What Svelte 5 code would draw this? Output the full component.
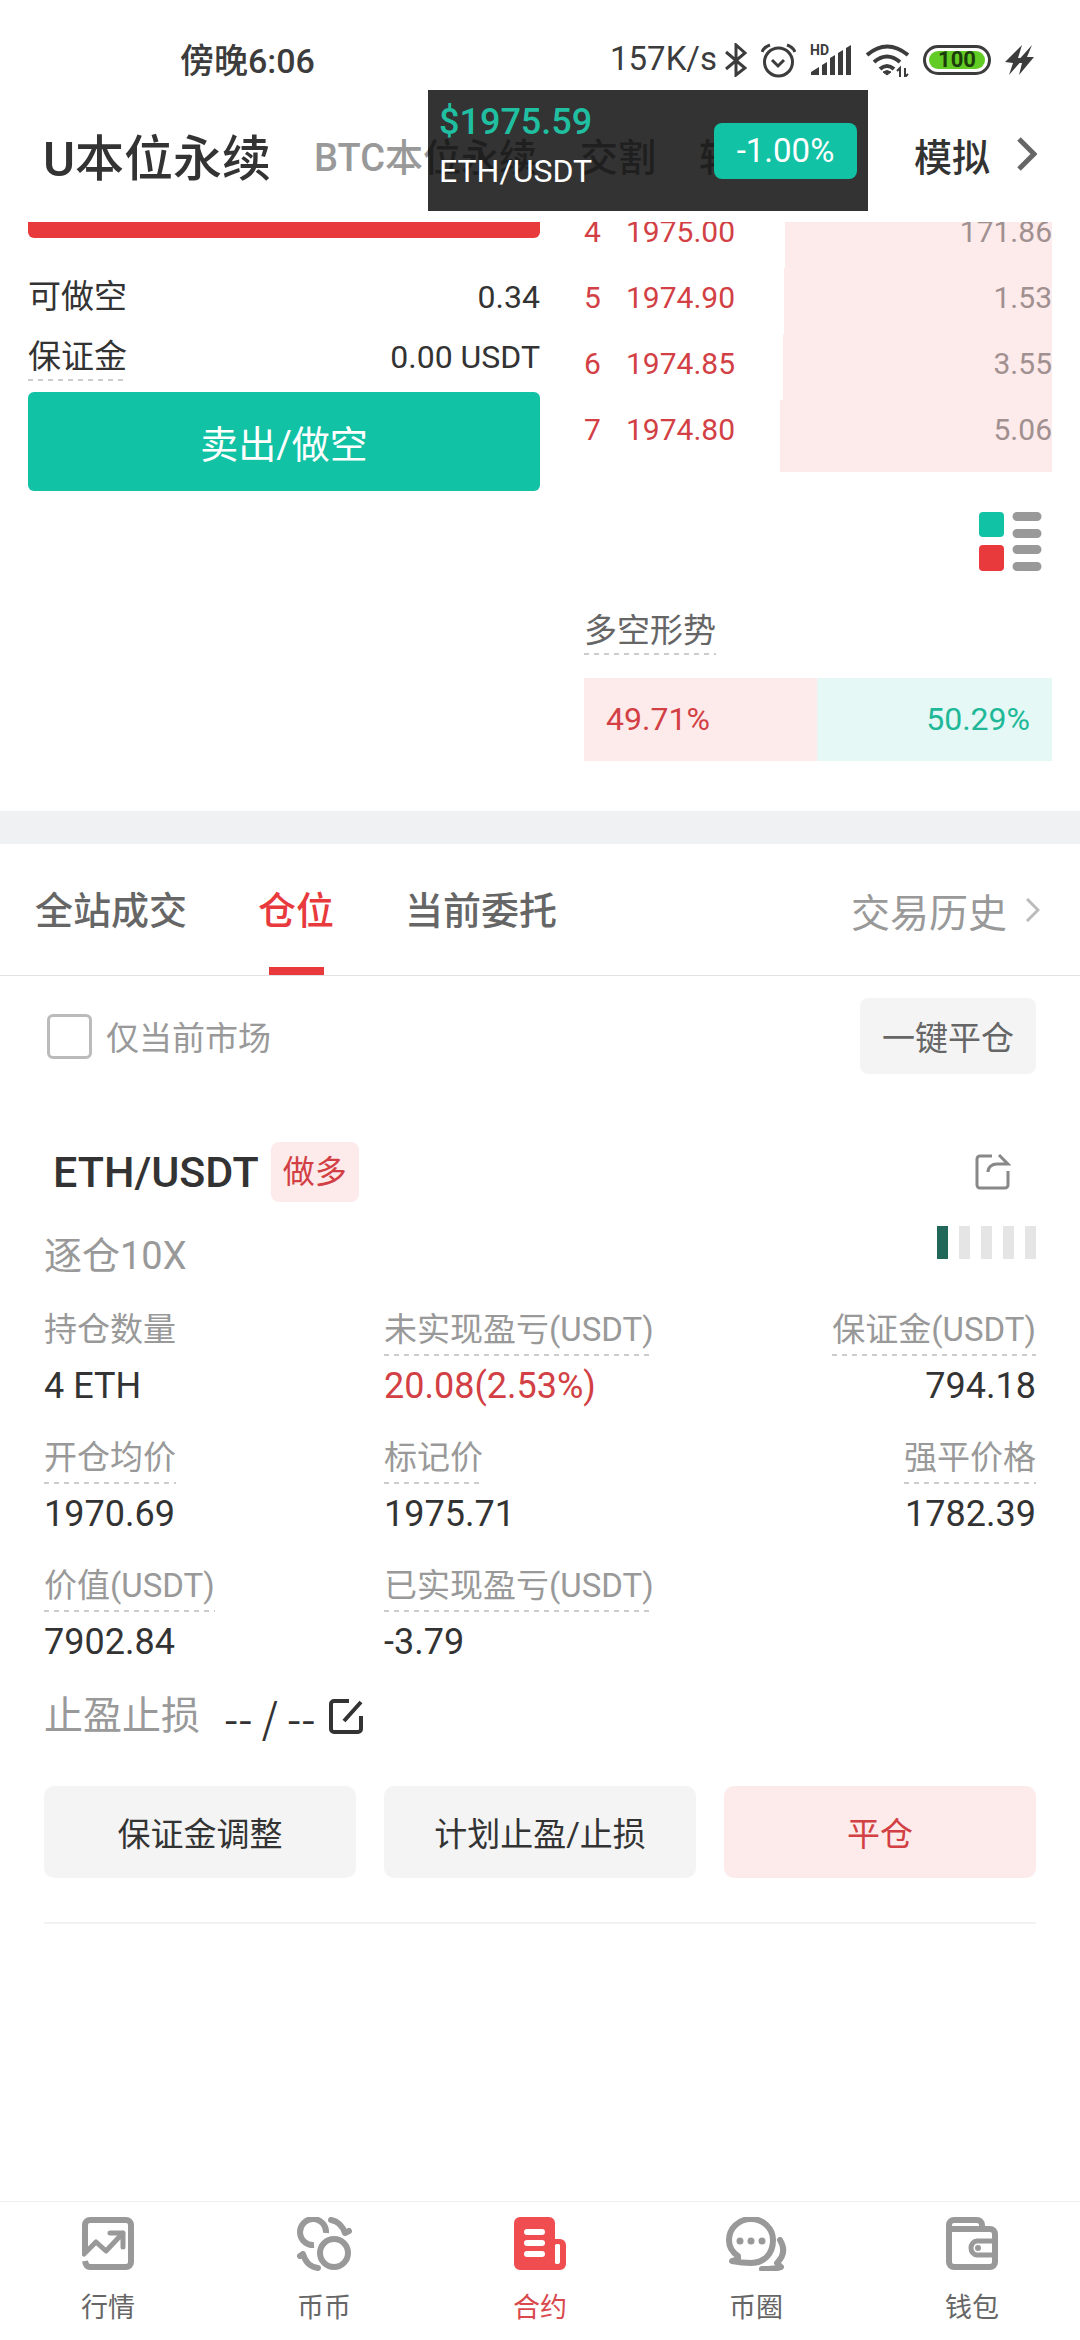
<script>
	let onlyCurrent = false;

	const asks = [
		{ level: 4, price: '1975.00', amount: '171.86', depth: 57 },
		{ level: 5, price: '1974.90', amount: '1.53', depth: 57.3 },
		{ level: 6, price: '1974.85', amount: '3.55', depth: 57.5 },
		{ level: 7, price: '1974.80', amount: '5.06', depth: 58.2 }
	];

	const stats = [
		{ label: '持仓数量', value: '4 ETH', plain: true },
		{ label: '未实现盈亏(USDT)', value: '20.08(2.53%)', red: true },
		{ label: '保证金(USDT)', value: '794.18' },
		{ label: '开仓均价', value: '1970.69' },
		{ label: '标记价', value: '1975.71' },
		{ label: '强平价格', value: '1782.39' },
		{ label: '价值(USDT)', value: '7902.84' },
		{ label: '已实现盈亏(USDT)', value: '-3.79' }
	];

	// adl risk level, out of 5
	const risk = 1;

	const shortRatio = 49.71;
	const longRatio = 50.29;
</script>

<div class="page">
	<header>
		<div class="status">
			<span class="time">傍晚6:06</span>
			<div class="status-icons">
				<span class="speed">
					<span>157K/s</span>
					<svg width="22" height="34" viewBox="0 0 22 34" fill="none" stroke="#3c3c3c" stroke-width="3">
						<path d="M1 9L20 25L11 32V2L20 10L1 26" />
					</svg>
				</span>
				<svg width="35" height="35" viewBox="0 0 35 35" fill="none" stroke="#3c3c3c" stroke-width="3">
					<circle cx="17.500" cy="19" r="14" />
					<path d="M11 17L17 23L23 17M1 9Q3 4 9 2M26 2Q32 4 34 9" />
				</svg>
				<svg width="42" height="32" viewBox="0 0 42 32" fill="#3c3c3c">
					<path d="M1 31V28L9 23V31ZM12 31V21L17 18V31ZM20 31V14L25 11V31ZM28 31V9L33 6V31ZM36 31V4L41 1V31Z" />
					<text x="0" y="11" font-size="14" font-weight="700">HD</text>
				</svg>
				<svg width="43" height="34" viewBox="0 0 43 34" fill="none" stroke="#3c3c3c" stroke-width="4">
					<path d="M1 12Q21 -5 42 12M8 19Q21 8 34 19M14 26Q21 20 28 26" />
					<path d="M17 29Q21 26 25 29L21 32Z" fill="#3c3c3c" stroke-width="1" />
					<path d="M34 34V25L31 28M39 25V34L42 31" stroke-width="2" />
				</svg>
				<span class="battery"><span>100</span></span>
				<svg width="29" height="30" viewBox="0 0 29 30" fill="#3c3c3c">
					<path d="M17 0L0 17L8 18L4 30L19 13L13 13ZM27 0L11 18L17 18L14 30L29 12L22 12Z" />
				</svg>
			</div>
		</div>

		<nav class="markets">
			<button class="current">U本位永续</button>
			<button>BTC本位永续</button>
			<button>交割</button>
			<button>轻</button>
			<button class="demo">模拟</button>
			<svg width="20" height="34" viewBox="0 0 20 34" fill="none" stroke="#666" stroke-width="5">
				<path d="M2 2L17 17L2 32" />
			</svg>
		</nav>

		<aside class="ticker">
			<div>
				<strong>$1975.59</strong>
				<span>ETH/USDT</span>
			</div>
			<b>-1.00%</b>
		</aside>
	</header>

	<section class="trade">
		<div class="order">
			<button class="buy" aria-label="long"></button>
			<div class="row first">
				<span>可做空</span>
				<span>0.34</span>
			</div>
			<div class="row">
				<span class="dashed">保证金</span>
				<span>0.00 USDT</span>
			</div>
			<button class="sell">卖出/做空</button>
		</div>

		<div class="book">
			<div class="clip">
				<table>
					<tbody>
						{#each asks as ask}
							<tr style="--depth: {ask.depth}%">
								<td class="level">{ask.level}</td>
								<td class="price">{ask.price}</td>
								<td class="amount">{ask.amount}</td>
							</tr>
						{/each}
					</tbody>
				</table>
			</div>

			<button class="layout" aria-label="layout">
				<svg width="63" height="59" viewBox="0 0 63 59">
					<rect width="25" height="25" rx="4" fill="#12c2a5" />
					<rect y="33" width="25" height="26" rx="4" fill="#e83a3d" />
					<path d="M38 4.500H58M38 21.500H58M38 37.500H58M38 54.500H58" stroke="#999" stroke-width="9" stroke-linecap="round" />
				</svg>
			</button>

			<span class="trend dashed">多空形势</span>
			<div class="ratio">
				<span class="short" style="width: {shortRatio}%">{shortRatio}%</span>
				<span class="long" style="width: {longRatio}%">{longRatio}%</span>
			</div>
		</div>
	</section>

	<nav class="tabs">
		<button>全站成交</button>
		<button class="active">仓位</button>
		<button>当前委托</button>
		<a href="#history">
			交易历史
			<svg width="14" height="24" viewBox="0 0 14 24" fill="none" stroke="#bbb" stroke-width="3">
				<path d="M1 1L12 12L1 23" />
			</svg>
		</a>
	</nav>

	<main>
		<div class="filter">
			<label>
				<input type="checkbox" bind:checked={onlyCurrent} />
				仅当前市场
			</label>
			<button>一键平仓</button>
		</div>

		<article>
			<div class="title">
				<h2>ETH/USDT</h2>
				<span class="side">做多</span>
				<button class="share" aria-label="share">
					<svg width="36" height="36" viewBox="0 0 36 36" fill="none" stroke="#888" stroke-width="3">
						<path d="M17 2H5A3 3 0 0 0 2 5V31A3 3 0 0 0 5 34H30A3 3 0 0 0 33 31V17" />
						<path d="M13 18C13 13 17 10 22 10H33L24 1" />
					</svg>
				</button>
			</div>

			<div class="leverage">
				<span>逐仓10X</span>
				<div class="risk">
					{#each Array(5) as _, i}
						<i class:on={i < risk}></i>
					{/each}
				</div>
			</div>

			<dl>
				{#each stats as stat}
					<div>
						<dt class:dashed={!stat.plain}>{stat.label}</dt>
						<dd class:red={stat.red}>{stat.value}</dd>
					</div>
				{/each}
			</dl>

			<div class="stop">
				<span>止盈止损</span>
				<b>-- / --</b>
				<button aria-label="edit">
					<svg width="35" height="35" viewBox="0 0 35 35" fill="none" stroke="#333" stroke-width="4">
						<path d="M20 2H5A3 3 0 0 0 2 5V30A3 3 0 0 0 5 33H29A3 3 0 0 0 32 30V17M32 3L15 22" />
					</svg>
				</button>
			</div>

			<div class="actions">
				<button>保证金调整</button>
				<button>计划止盈/止损</button>
				<button class="close">平仓</button>
			</div>
		</article>
	</main>

	<nav class="bottom">
		<a href="#market">
			<svg width="52" height="54" viewBox="0 0 52 54" fill="none" stroke="#999" stroke-width="6">
				<path d="M3 36V8A5 5 0 0 1 8 3H44A5 5 0 0 1 49 8V45A5 5 0 0 1 44 50H8Q4 50 3 44" />
				<path d="M2 37L14 25L24 34L41 16M28 16H41V30" stroke-linecap="round" stroke-linejoin="round" stroke-width="5" />
			</svg>
			行情
		</a>
		<a href="#spot">
			<svg width="55" height="54" viewBox="0 0 55 54" fill="none" stroke="#999" stroke-width="6">
				<path d="M29 16A13 13 0 1 0 17 28" />
				<circle cx="37" cy="36" r="14" />
				<path d="M34 3C41 4 46 10 48 16L52 14M21 51C13 50 8 44 6 37L3 39" stroke-linecap="round" stroke-linejoin="round" />
			</svg>
			币币
		</a>
		<a href="#contract" class="active">
			<svg width="52" height="54" viewBox="0 0 52 54">
				<path fill-rule="evenodd" fill="#f04d50" d="M6 0H35A6 6 0 0 1 41 6V22H46A6 6 0 0 1 52 28V47A6 6 0 0 1 46 53H6A6 6 0 0 1 0 47V6A6 6 0 0 1 6 0ZM41 28V46Q41 47 43 47Q46 47 46 45V28Q46 27 44 27Q41 27 41 28Z" />
				<path d="M13 15H28M13 26H28M13 37H28" stroke="#fff" stroke-width="6" stroke-linecap="round" />
			</svg>
			合约
		</a>
		<a href="#circle">
			<svg width="61" height="54" viewBox="0 1 61 54" fill="none" stroke="#999" stroke-width="6" stroke-linecap="round" stroke-linejoin="round">
				<path d="M6 45L12 43V40C6 36 3 31 3 24A22 21 0 0 1 47 24C47 38 38 47 25 47C17 47 11 46 6 45Z" />
				<path d="M54 24C59 32 58 40 51 47L55 51C50 53 42 53 36 53" />
				<path d="M14 25H14.010M25 25H25.010M36 25H36.010" stroke-width="7" />
			</svg>
			币圈
		</a>
		<a href="#wallet">
			<svg width="52" height="54" viewBox="0 0 52 54" fill="none" stroke="#999" stroke-width="6">
				<path d="M3 12H44A5 5 0 0 1 49 17V45A5 5 0 0 1 44 50H8A5 5 0 0 1 3 45V8A5 5 0 0 1 8 3H31A5 5 0 0 1 36 8V12" />
				<path d="M49 24H31A6 7 0 0 0 31 38H49" stroke-width="5" />
				<circle cx="32" cy="31" r="3" fill="#999" stroke="none" />
			</svg>
			钱包
		</a>
	</nav>
</div>

<style>
	:global(body) {
		background: #fff;
		font-family: Roboto, "Noto Sans CJK SC", sans-serif;
		color: #333;
	}

	.page {
		display: flex;
		flex-direction: column;
		min-height: 100vh;
	}

	button {
		padding: 0;
		border: none;
		background: none;
		font-family: inherit;
		font-size: 33px;
		color: inherit;
		cursor: pointer;
	}

	a {
		text-decoration: none;
	}

	svg {
		display: block;
		flex-shrink: 0;
	}

	header {
		position: relative;
	}

	.status {
		display: flex;
		justify-content: space-between;
		align-items: center;
		height: 60px;
		padding: 30px 46px 0 180px;
		font-size: 33px;
		font-weight: 500;
		color: #3c3c3c;
	}

	.time,
	.speed span {
		padding-bottom: 3px;
	}

	.time {
		font-size: 34px;
	}

	.speed span {
		font-weight: 400;
	}

	.status-icons {
		display: flex;
		align-items: center;
		gap: 14px;
	}

	.speed {
		display: flex;
		align-items: center;
		gap: 8px;
	}

	.battery {
		display: flex;
		box-sizing: border-box;
		width: 68px;
		height: 30px;
		padding: 3px;
		border: 3px solid #3c3c3c;
		border-radius: 15px;
	}

	.battery span {
		flex: 1;
		border-radius: 9px;
		background: #62cc24;
		color: #1c3c0c;
		font-size: 22px;
		font-weight: 700;
		line-height: 18px;
		text-align: center;
	}

	.markets {
		display: flex;
		align-items: center;
		gap: 43px;
		box-sizing: border-box;
		height: 132px;
		padding: 0 43px 4px;
	}

	.markets button {
		font-size: 38px;
		font-weight: 500;
		color: #999;
		white-space: nowrap;
	}

	.markets .current {
		font-size: 49px;
		color: #333;
	}

	.markets .demo {
		margin-left: auto;
		margin-right: -16px;
		color: #333;
	}

	/* floating price window */
	.ticker {
		position: absolute;
		top: 90px;
		left: 428px;
		display: flex;
		justify-content: space-between;
		align-items: center;
		box-sizing: border-box;
		width: 440px;
		height: 121px;
		padding: 0 11px;
		background: rgba(0, 0, 0, 0.8);
		color: #fff;
	}

	.ticker div {
		display: flex;
		flex-direction: column;
		padding-bottom: 7px;
		font-size: 32px;
		line-height: 49px;
	}

	.ticker strong {
		font-size: 36px;
		font-weight: 500;
		color: #20bfa2;
	}

	.ticker b {
		width: 143px;
		border-radius: 8px;
		background: #12c2a5;
		font-size: 33px;
		font-weight: 400;
		line-height: 56px;
		text-align: center;
	}

	.trade {
		display: grid;
		grid-template-columns: 512fr 468fr;
		gap: 44px;
		padding: 0 28px 50px;
		border-bottom: 33px solid #f0f1f3;
		font-size: 30px;
	}

	.order {
		display: flex;
		flex-direction: column;
	}

	.buy {
		height: 16px;
		border-radius: 0 0 6px 6px;
		background: #e83a3d;
	}

	.row {
		display: flex;
		justify-content: space-between;
		margin-top: 16px;
		font-size: 32px;
		line-height: 44px;
	}

	.row.first {
		margin-top: 37px;
	}

	.row span:first-child {
		font-size: 33px;
	}

	.dashed {
		padding-bottom: 2px;
		background: repeating-linear-gradient(to right, #ccc 0 5px, transparent 5px 10px) left bottom / 100% 2px no-repeat;
	}

	.sell {
		height: 99px;
		margin-top: 11px;
		border-radius: 6px;
		background: #12c2a5;
		color: #fff;
		font-size: 38px;
	}

	.book {
		display: flex;
		flex-direction: column;
		align-items: flex-start;
	}

	.clip {
		width: 100%;
		overflow: hidden;
	}

	table {
		width: 100%;
		margin-top: -20px;
		border-collapse: collapse;
		line-height: 60px;
	}

	tr {
		height: 66px;
		background: linear-gradient(to left, #fdeaea var(--depth), transparent var(--depth));
	}

	tr:last-child {
		height: 72px;
	}

	td {
		padding: 0;
		vertical-align: top;
	}

	.level {
		width: 42px;
	}

	.level,
	.price,
	.red {
		color: #d23f44;
	}

	.amount {
		text-align: right;
		color: #a09090;
	}

	.layout {
		align-self: flex-end;
		margin: 40px 10px 38px;
	}

	.trend {
		font-size: 33px;
		line-height: 44px;
		color: #666;
	}

	.ratio {
		display: flex;
		width: 100%;
		margin-top: 23px;
		font-size: 32px;
		line-height: 83px;
	}

	.ratio span {
		box-sizing: border-box;
		padding: 0 22px;
	}

	.ratio .short {
		background: #fdeaea;
		color: #d23f44;
	}

	.ratio .long {
		background: #e5f8f5;
		color: #20b898;
		text-align: right;
	}

	.tabs {
		display: flex;
		gap: 71px;
		height: 131px;
		padding: 0 40px 0 35px;
		border-bottom: 1px solid #e2e2e2;
	}

	.tabs button {
		font-size: 38px;
		font-weight: 500;
		line-height: 134px;
		color: #666;
		white-space: nowrap;
	}

	.tabs .active {
		color: #e83a3d;
		background: linear-gradient(#e83a3d, #e83a3d) center bottom / 55px 8px no-repeat;
	}

	.tabs a {
		display: flex;
		align-items: center;
		gap: 19px;
		margin-left: auto;
		font-size: 39px;
		color: #999;
	}

	main {
		flex: 1;
		padding: 22px 44px 48px;
	}

	.filter {
		display: flex;
		justify-content: space-between;
		align-items: center;
		margin-bottom: 68px;
	}

	.filter label {
		display: flex;
		align-items: center;
		gap: 14px;
		font-size: 33px;
		color: #999;
	}

	.filter input {
		appearance: none;
		width: 45px;
		height: 45px;
		margin: 0 0 0 3px;
		border: 3px solid #bbb;
		border-radius: 6px;
	}

	.filter input:checked {
		background: #e83a3d;
	}

	.filter button {
		width: 176px;
		height: 76px;
		border-radius: 8px;
		background: #f4f4f4;
		color: #666;
	}

	article {
		padding-bottom: 44px;
		border-bottom: 2px solid #f2f2f2;
	}

	.title {
		display: flex;
		align-items: center;
		gap: 12px;
		padding: 0 25px 0 9px;
	}

	h2 {
		margin: 0;
		font-size: 43px;
		font-weight: 500;
		line-height: 60px;
	}

	.side {
		padding: 0 12px;
		border-radius: 8px;
		background: #fdeaea;
		color: #d23f44;
		font-size: 32px;
		line-height: 60px;
	}

	.share {
		margin-left: auto;
	}

	.leverage {
		display: flex;
		justify-content: space-between;
		margin: 24px 0 22px;
		font-size: 38px;
		line-height: 60px;
		color: #999;
	}

	.risk {
		display: flex;
		gap: 11px;
	}

	.risk i {
		width: 11px;
		height: 33px;
		background: #e5e5e5;
	}

	.risk .on {
		background: #22685a;
	}

	dl {
		display: grid;
		grid-template-columns: 340fr 340fr 312fr;
		row-gap: 26px;
		margin: 0;
	}

	dl div {
		display: flex;
		flex-direction: column;
		align-items: flex-start;
		gap: 6px;
	}

	dl div:nth-child(3n) {
		align-items: flex-end;
	}

	dt,
	dt.dashed {
		padding-bottom: 4px;
		font-size: 33px;
		line-height: 44px;
		color: #999;
	}

	dd {
		margin: 0;
		font-size: 36px;
		line-height: 48px;
	}

	.stop {
		display: flex;
		align-items: center;
		margin: 26px 0 46px;
		font-size: 39px;
		line-height: 48px;
		color: #999;
	}

	.stop b {
		margin: 0 14px 0 24px;
		font-family: "Noto Sans CJK SC", sans-serif;
		font-size: 41px;
		font-weight: 400;
		color: #333;
	}

	.actions {
		display: grid;
		grid-template-columns: repeat(3, 1fr);
		gap: 28px;
	}

	.actions button {
		height: 92px;
		border-radius: 10px;
		background: #f4f4f4;
	}

	.actions .close {
		background: #fdeaea;
		color: #d23f44;
	}

	.bottom {
		position: sticky;
		bottom: 0;
		display: grid;
		grid-template-columns: repeat(5, 1fr);
		padding: 15px 0 14px;
		border-top: 1px solid #eee;
		background: #fff;
	}

	.bottom a {
		display: flex;
		flex-direction: column;
		align-items: center;
		gap: 19px;
		font-size: 27px;
		line-height: 36px;
		color: #666;
	}

	.bottom .active {
		color: #d9484c;
	}
</style>
